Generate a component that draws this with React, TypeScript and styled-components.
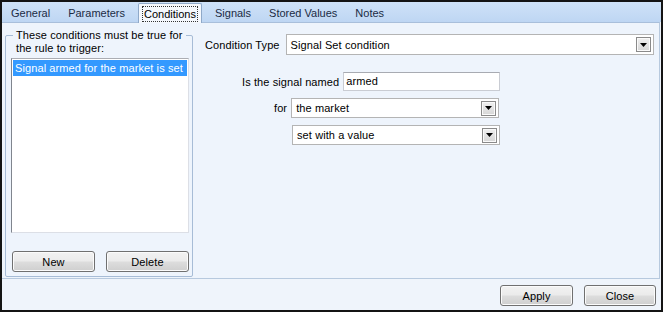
import React from "react";
import styled, { createGlobalStyle } from "styled-components";

const GlobalStyle = createGlobalStyle`
  html, body {
    margin: 0;
    padding: 0;
    background: #ffffff;
  }
  body {
    font-family: "Liberation Sans", Arial, sans-serif;
    font-size: 11px;
    letter-spacing: 0.1px;
    color: #000;
  }
`;

const TABS = ["General", "Parameters", "Conditions", "Signals", "Stored Values", "Notes"];

const Window = styled.div`
  width: 663px;
  height: 312px;
  box-sizing: border-box;
  border: 2px solid #141414;
  background: #eff4fb;
  display: flex;
  flex-direction: column;
`;

const TabStrip = styled.div`
  height: 20px;
  flex: none;
  display: flex;
  align-items: flex-end;
  letter-spacing: 0;
  background: linear-gradient(#cfe2f8, #bed6f3);
  position: relative;
  z-index: 1;
`;

const Tab = styled.div<{ $active?: boolean }>`
  height: 18px;
  display: flex;
  align-items: center;
  padding: ${(p) => (p.$active ? "0 4px" : "0 9px")};
  margin: ${(p) => (p.$active ? "0 4px -1px 4px" : "0")};
  box-sizing: border-box;
  white-space: nowrap;
  color: #1b2b44;
  ${(p) =>
    p.$active &&
    `
    background: #f5f8fd;
    border: 1px solid #8fa9c9;
    border-bottom: none;
    border-radius: 2px 2px 0 0;
    height: 20px;
    color: #000;
  `}
`;

const FocusText = styled.span`
  outline: 1px dotted #333;
  padding: 1px 1px;
  line-height: 12px;
`;

const Panel = styled.div`
  height: 257px;
  flex: none;
  margin-right: 1px;
  box-sizing: border-box;
  border-top: 1px solid #a9bfdb;
  border-right: 1px solid #b7c9de;
  border-bottom: 1px solid #b7c9de;
  background: #eef4fc;
  display: flex;
`;

const GroupBox = styled.div`
  width: 188px;
  margin: 12px 0 0 3px;
  height: 242px;
  box-sizing: border-box;
  border: 1px solid #a7bcd6;
  border-radius: 2px;
  display: flex;
  flex-direction: column;
  padding: 0 3px 4px 5px;
`;

const Caption = styled.div`
  align-self: flex-start;
  margin: -7px 0 0 2px;
  padding: 0 3px;
  background: #eef4fc;
  line-height: 13px;
  white-space: nowrap;
`;

const ListBox = styled.div`
  margin-top: 3px;
  height: 175px;
  box-sizing: border-box;
  background: #fff;
  border: 1px solid #dcdfe6;
  border-left-color: #80858e;
  border-top-color: #abadb3;
  padding: 1px;
`;

const ListItem = styled.div<{ $selected?: boolean }>`
  height: 16px;
  line-height: 16px;
  padding-left: 2px;
  white-space: nowrap;
  background: ${(p) => (p.$selected ? "#3399ff" : "transparent")};
  color: ${(p) => (p.$selected ? "#fff" : "#000")};
`;

const ButtonRow = styled.div<{ $gap: number }>`
  display: flex;
  gap: ${(p) => p.$gap}px;
`;

const GroupButtons = styled(ButtonRow)`
  margin-top: 18px;
  padding-left: 1px;
`;

const Button = styled.button<{ $w: number }>`
  width: ${(p) => p.$w}px;
  height: 21px;
  box-sizing: border-box;
  border: 1px solid #707070;
  border-radius: 3px;
  background: linear-gradient(#f2f2f2 0%, #ebebeb 48%, #dddddd 52%, #cfcfcf 100%);
  box-shadow: inset 0 0 0 1px #fbfbfb;
  font-family: "Liberation Sans", Arial, sans-serif;
  font-size: 11px;
  letter-spacing: 0.1px;
  color: #000;
  padding: 0;
`;

const RightSide = styled.div`
  flex: 1;
  padding: 11px 5px 0 12px;
  display: flex;
  flex-direction: column;
`;

const TypeRow = styled.div`
  display: flex;
  align-items: center;
  gap: 6px;
  margin-bottom: 17px;
`;

const FormRow = styled.div<{ $indent: number }>`
  display: flex;
  align-items: center;
  gap: 4px;
  padding-left: ${(p) => p.$indent}px;
  margin-bottom: 7px;
`;

const Label = styled.span`
  white-space: nowrap;
`;

const TextInput = styled.div`
  width: 157px;
  height: 19px;
  box-sizing: border-box;
  background: #fff;
  border: 1px solid #c9ccd3;
  border-top-color: #a8abb2;
  padding-left: 2px;
  line-height: 17px;
`;

const Combo = styled.div<{ $w?: number; $h: number }>`
  ${(p) => (p.$w ? `width: ${p.$w}px;` : "flex: 1;")}
  height: ${(p) => p.$h}px;
  box-sizing: border-box;
  background: #fff;
  border: 1px solid #b4b4b4;
  display: flex;
  align-items: center;
  padding: 1px 2px 1px 4px;
`;

const ComboText = styled.span`
  flex: 1;
  white-space: nowrap;
`;

const ArrowBox = styled.div`
  width: 15px;
  height: 15px;
  box-sizing: border-box;
  border: 1px solid #8a8a8a;
  background: linear-gradient(#f0f0f0, #d6d6d6);
  box-shadow: inset 0 0 0 1px #fafafa;
  display: flex;
  align-items: center;
  justify-content: center;
`;

const Footer = styled.div`
  flex: 1;
  display: flex;
  justify-content: flex-end;
  align-items: flex-start;
  gap: 11px;
  padding: 6px 5px 0 0;
`;

const Arrow = () => (
  <svg width="7" height="4" viewBox="0 0 7 4">
    <path d="M0 0h7L3.5 4z" fill="#000" />
  </svg>
);

const ComboBox: React.FC<{ value: string; w?: number; h: number }> = ({ value, w, h }) => (
  <Combo $w={w} $h={h}>
    <ComboText>{value}</ComboText>
    <ArrowBox>
      <Arrow />
    </ArrowBox>
  </Combo>
);

export default function App() {
  return (
    <>
      <GlobalStyle />
      <Window>
        <TabStrip>
          {TABS.map((t) =>
            t === "Conditions" ? (
              <Tab key={t} $active>
                <FocusText>{t}</FocusText>
              </Tab>
            ) : (
              <Tab key={t}>{t}</Tab>
            )
          )}
        </TabStrip>
        <Panel>
          <GroupBox>
            <Caption>
              These conditions must be true for
              <br />
              the rule to trigger:
            </Caption>
            <ListBox>
              <ListItem $selected>Signal armed for the market is set</ListItem>
            </ListBox>
            <GroupButtons $gap={11}>
              <Button $w={83}>New</Button>
              <Button $w={83}>Delete</Button>
            </GroupButtons>
          </GroupBox>
          <RightSide>
            <TypeRow>
              <Label>Condition Type</Label>
              <ComboBox value="Signal Set condition" h={21} />
            </TypeRow>
            <FormRow $indent={37}>
              <Label>Is the signal named</Label>
              <TextInput>armed</TextInput>
            </FormRow>
            <FormRow $indent={69}>
              <Label>for</Label>
              <ComboBox value="the market" w={208} h={20} />
            </FormRow>
            <FormRow $indent={87}>
              <ComboBox value="set with a value" w={208} h={20} />
            </FormRow>
          </RightSide>
        </Panel>
        <Footer>
          <Button $w={73}>Apply</Button>
          <Button $w={72}>Close</Button>
        </Footer>
      </Window>
    </>
  );
}
